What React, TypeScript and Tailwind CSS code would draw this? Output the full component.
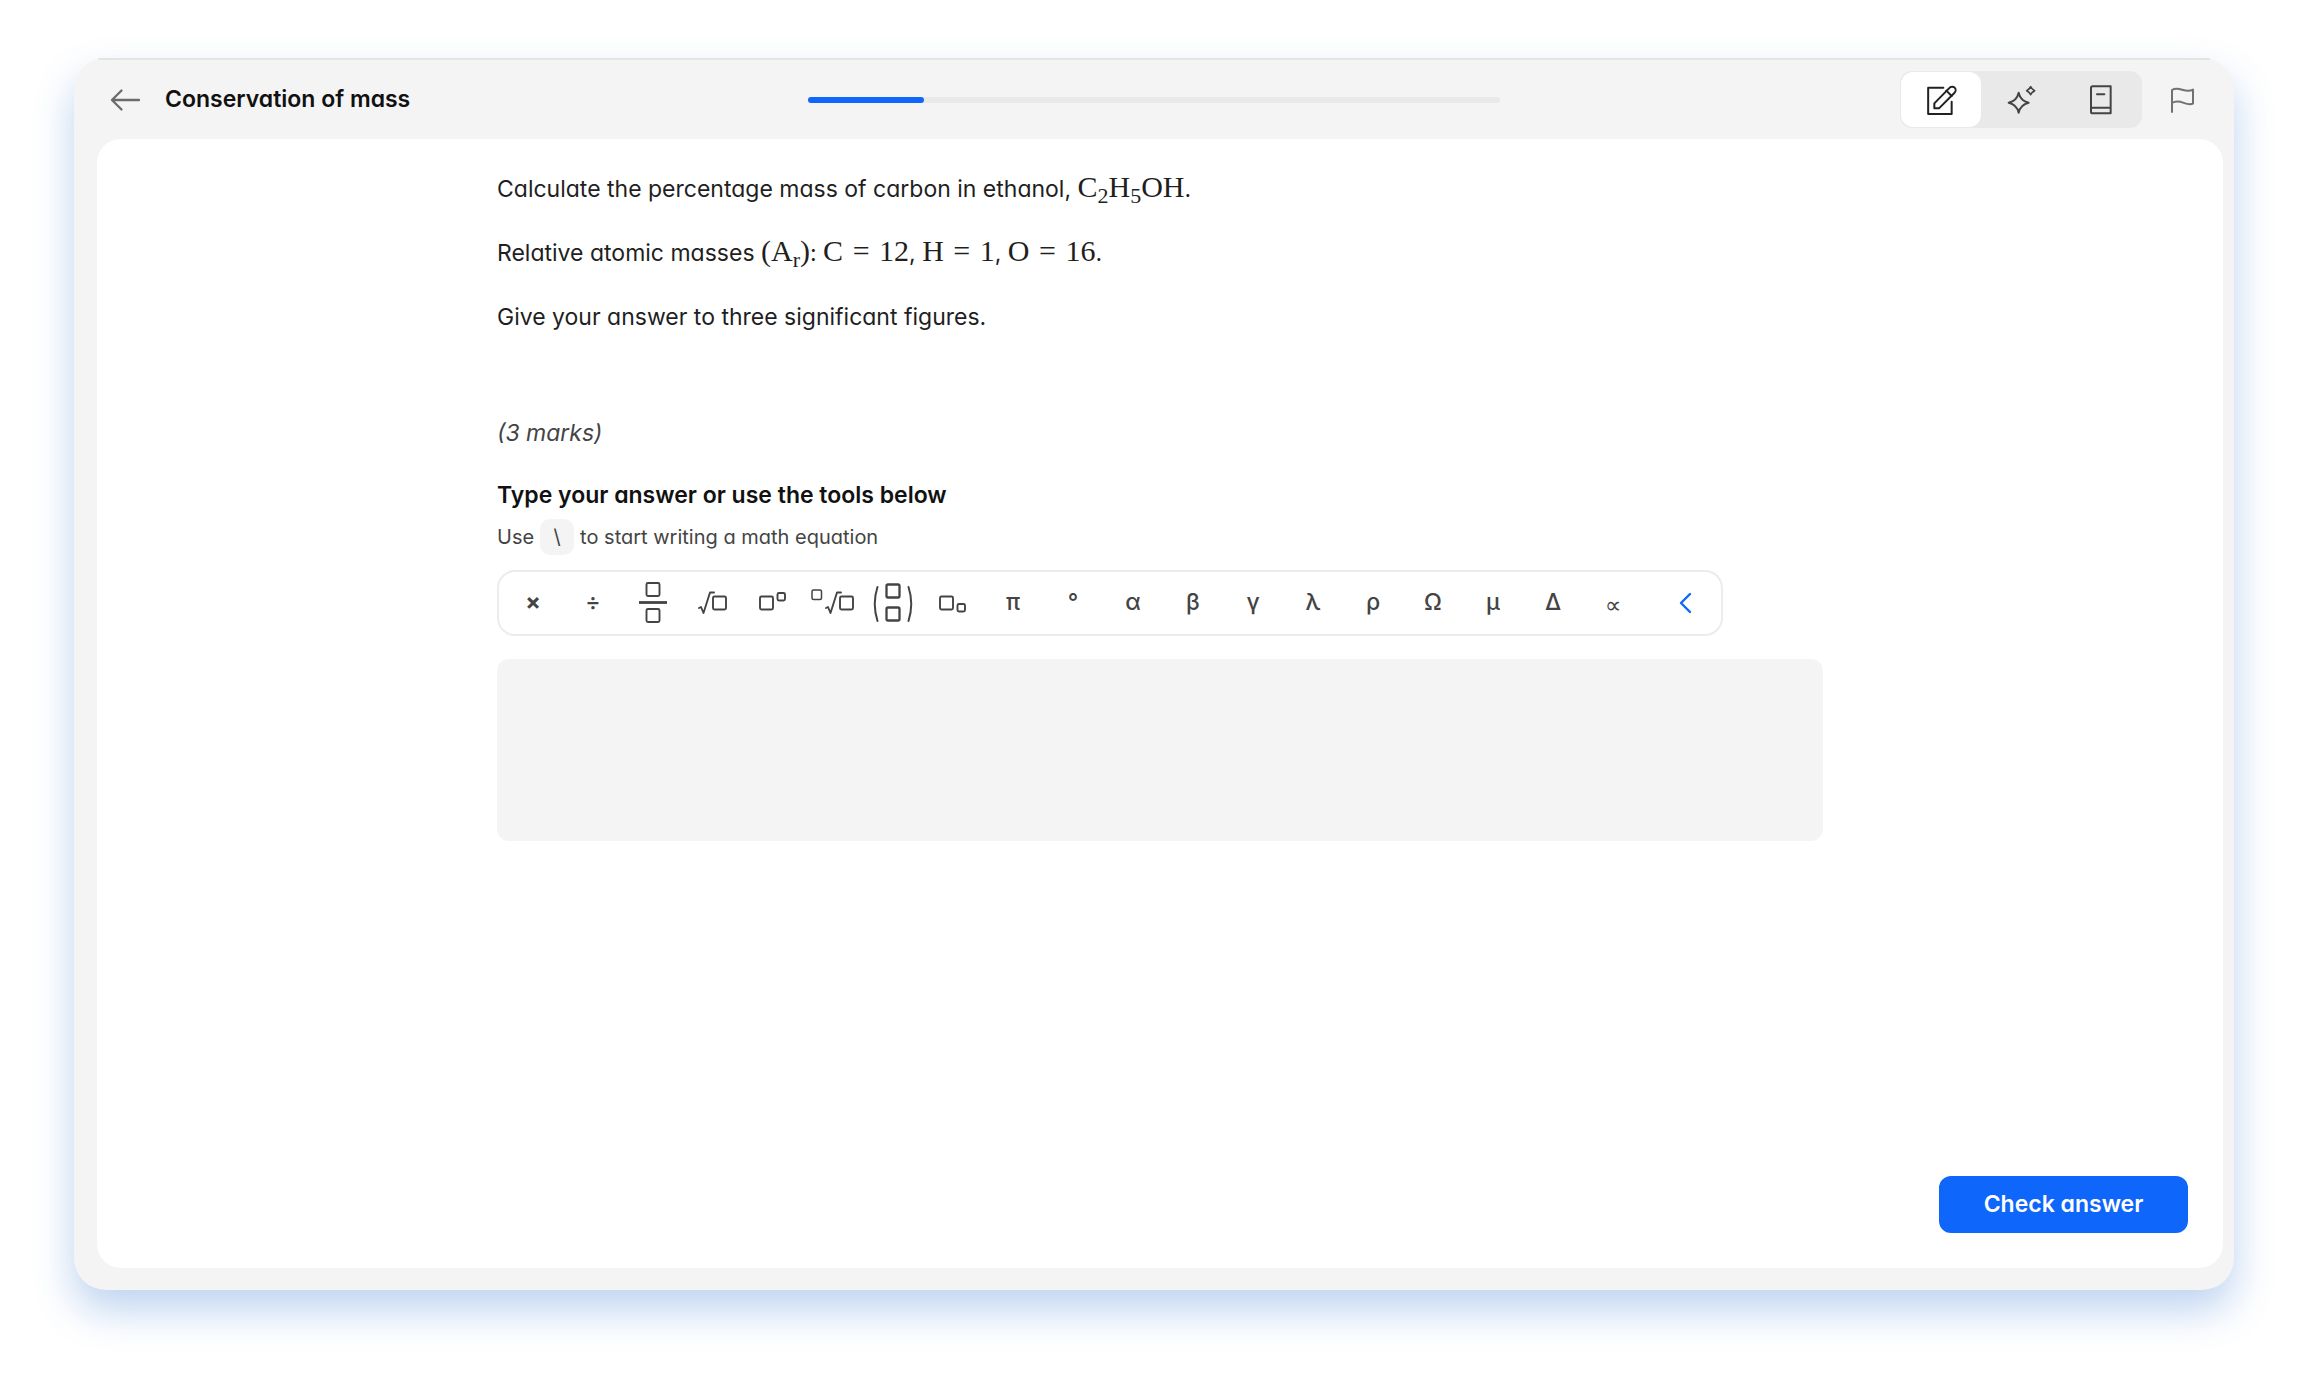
import type { ReactNode } from "react";

const box = (x: number, y: number, s: number, w = 1.9) => (
  <rect x={x} y={y} width={s} height={s} rx={1.5} strokeWidth={w} />
);

function Glyph({ children }: { children: ReactNode }) {
  return (
    <svg className="h-12 w-12 shrink-0" viewBox="0 0 48 48" fill="none" stroke="currentColor" strokeLinecap="round" strokeLinejoin="round" aria-hidden="true">
      {children}
    </svg>
  );
}

function Char({ children }: { children: ReactNode }) {
  return <span className="pb-0.5">{children}</span>;
}

const tools: { name: string; face: ReactNode }[] = [
  { name: "Multiply", face: <span className="pb-0.5 font-bold">×</span> },
  { name: "Divide", face: <Char>÷</Char> },
  {
    name: "Fraction",
    face: <Glyph>{box(17.5, 4, 13)}<path d="M10 23.500H38" strokeWidth="2.8" strokeLinecap="butt" />{box(17.5, 30, 13)}</Glyph>,
  },
  {
    name: "Square root",
    face: <Glyph><path d="M10 29l2-1 2.5 6L21 13.5h4" strokeWidth="1.9" />{box(24, 17.5, 13)}</Glyph>,
  },
  { name: "Superscript", face: <Glyph>{box(11, 17.5, 13)}{box(28.5, 14, 7.5)}</Glyph> },
  {
    name: "Nth root",
    face: <Glyph>{box(3, 11, 9.5, 1.5)}<path d="M17 29l2-1 2.5 6L28 13.5h4" strokeWidth="1.9" />{box(31, 17.5, 13)}</Glyph>,
  },
  {
    name: "Binomial",
    face: <Glyph><path d="M8.5 8q-5.5 16.5 0 34M39.5 8q5.5 16.5 0 34" strokeWidth="2" />{box(17.5, 5.5, 13, 2.3)}{box(17.5, 28.5, 13, 2.3)}</Glyph>,
  },
  { name: "Subscript", face: <Glyph>{box(11, 17.5, 13)}{box(28.5, 25, 7.5)}</Glyph> },
  ...["π", "°", "α", "β", "γ", "λ", "ρ", "Ω", "μ", "Δ"].map((c) => ({ name: c, face: <Char>{c}</Char> })),
  { name: "Proportional to", face: <span className="pt-1 font-['DejaVu_Sans',sans-serif] text-[23px] font-normal">∝</span> },
];

function HeaderIcon({ children }: { children: ReactNode }) {
  return (
    <svg className="h-8 w-8" viewBox="0 0 96 96" fill="none" stroke="currentColor" strokeWidth="6" strokeLinecap="round" strokeLinejoin="round" aria-hidden="true">
      {children}
    </svg>
  );
}

function M({ children }: { children: ReactNode }) {
  return <span className="font-['Liberation_Serif',serif] text-[30px] leading-none">{children}</span>;
}

function Sub({ children }: { children: ReactNode }) {
  return <sub className="text-[22px] leading-none">{children}</sub>;
}

function Equals() {
  return <span className="px-0.5"> = </span>;
}

export default function App() {
  return (
    <div className="flex min-h-screen bg-white pt-[58px] pr-[75px] pb-[92px] pl-[74px] font-['Inter',sans-serif] text-[#1f1f1f] [font-feature-settings:'cv11']">
      <div className="flex flex-1 flex-col rounded-[32px] bg-[#f4f4f4] pb-[22px] shadow-[0_20px_40px_rgba(38,108,205,0.3)]">
        <div className="mx-6 h-0.5 rounded-full bg-[#e4e4e4]" />
        <header className="grid h-[79px] grid-cols-[1fr_32%_1fr] items-center">
          <div className="flex items-center gap-6 pl-[35px]">
            <button type="button" aria-label="Back" className="text-[#6b6b6b]">
              <svg className="h-8 w-8" viewBox="0 0 32 32" fill="none" stroke="currentColor" strokeWidth="2.3" strokeLinecap="round" strokeLinejoin="round" aria-hidden="true">
                <path d="M30 16H3M12.5 6.5L3 16l9.5 9.5" />
              </svg>
            </button>
            <h1 className="text-[23px] font-semibold text-[#111]">Conservation of mass</h1>
          </div>
          <div role="progressbar" aria-valuenow={1} aria-valuemin={0} aria-valuemax={6} aria-label="Progress" className="h-1.5 rounded-full bg-[#e9e9e9]">
            <div className="h-full w-1/6 rounded-full bg-[#0f66fa]" />
          </div>
          <div className="flex items-center justify-end gap-4 pr-7">
            <div className="flex rounded-xl bg-[#e9e9e9] p-px text-[#444]">
              <button type="button" aria-label="Answer" aria-pressed="true" className="flex h-[55px] w-20 items-center justify-center rounded-xl bg-white text-[#222]">
                <HeaderIcon>
                  <path d="M55 11H9.5V90H80V53" />
                  <path d="M28 73V58L72 13C77 7 85 7 89 11C93 15 93 22 88 27L42 73Z" />
                  <path d="M64 20L80 36" />
                </HeaderIcon>
              </button>
              <button type="button" aria-label="Assistant" className="flex h-[55px] w-20 items-center justify-center rounded-xl">
                <HeaderIcon>
                  <path d="M41 26C45 44 53 52 71 56C53 60 45 68 41 86C37 68 29 60 11 56C29 52 37 44 41 26Z" />
                  <path d="M77 8Q81 16 89 20Q81 24 77 32Q73 24 65 20Q73 16 77 8Z" strokeWidth="5" />
                </HeaderIcon>
              </button>
              <button type="button" aria-label="Notes" className="flex h-[55px] w-20 items-center justify-center rounded-xl">
                <HeaderIcon>
                  <path d="M23 7H77V88H23Q18 88 18 83V12Q18 7 23 7ZM18 75Q18 71 23 71H77M36 31H58" />
                </HeaderIcon>
              </button>
            </div>
            <button type="button" aria-label="Report" className="flex h-12 w-12 items-center justify-center text-[#717171]">
              <HeaderIcon>
                <path d="M18 84V18C40 4 56 30 81 17V59C58 68 44 42 18 57" />
              </HeaderIcon>
            </button>
          </div>
        </header>

        <main className="mr-[11px] ml-[23px] flex flex-1 flex-col rounded-3xl bg-white pt-[30px] pb-[35px]">
          <div className="mx-auto w-full max-w-[1326px]">
            <div className="flex flex-col gap-6 text-[23px] [&>p]:h-10 [&>p]:leading-10">
              <p>Calculate the percentage mass of carbon in ethanol, <M>C<Sub>2</Sub>H<Sub>5</Sub>OH</M>.</p>
              <p>Relative atomic masses <M>(A<Sub>r</Sub>)</M>: <M>C<Equals />12</M>, <M>H<Equals />1</M>, <M>O<Equals />16</M>.</p>
              <p>Give your answer to three significant figures.</p>
            </div>
            <p className="mt-[76px] text-[23px] leading-10 text-[#444] italic">(3 marks)</p>
            <label htmlFor="answer" className="mt-[22px] block text-[23px] leading-10 font-semibold text-[#111]">Type your answer or use the tools below</label>
            <p className="mt-1 flex items-center gap-1.5 text-xl leading-9 text-[#444]">
              Use <kbd className="flex h-9 w-[34px] items-center justify-center rounded-[10px] bg-[#f4f4f4] font-['Inter',sans-serif] text-xl">\</kbd> to start writing a math equation
            </p>
            <div role="toolbar" aria-label="Maths symbols" className="mt-[15px] flex h-[66px] w-fit items-center rounded-[18px] border-2 border-[#ececec] pr-1.5 pl-1 text-[#444]">
              {tools.map((t) => (
                <button key={t.name} type="button" aria-label={t.name} className="flex h-12 w-15 items-center justify-center text-[23px] font-medium">
                  {t.face}
                </button>
              ))}
              <button type="button" aria-label="Collapse" className="ml-3 flex h-12 w-15 items-center justify-center text-[#0f66fa]">
                <svg className="h-6 w-6" viewBox="0 0 24 24" fill="none" stroke="currentColor" strokeWidth="2.4" strokeLinecap="round" strokeLinejoin="round" aria-hidden="true">
                  <path d="M17 3l-9 9 9 9" />
                </svg>
              </button>
            </div>
            <textarea id="answer" className="mt-[23px] block h-[182px] w-full resize-none rounded-xl bg-[#f4f4f4] p-4 text-[23px] outline-none" />
          </div>
          <button type="button" className="mt-auto mr-[35px] h-[57px] w-[249px] self-end rounded-xl bg-[#0f66fa] text-[23px] font-semibold text-white">Check answer</button>
        </main>
      </div>
    </div>
  );
}
